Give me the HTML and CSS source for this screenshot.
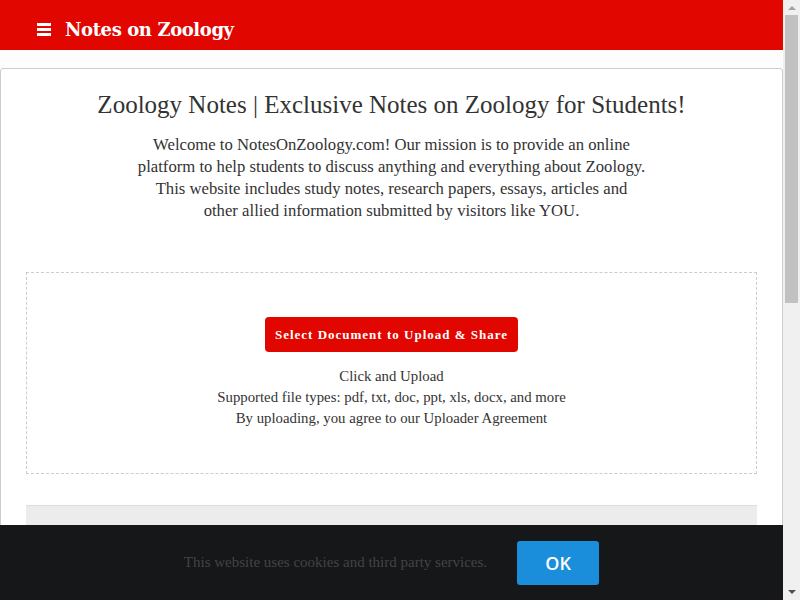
FILE: index.html
```html
<!DOCTYPE html>
<html lang="en">
<head>
<meta charset="utf-8">
<title>Notes on Zoology</title>
<link rel="stylesheet" href="styles.css">
</head>
<body>
<div class="page">
  <header class="topbar">
    <span class="burger" aria-hidden="true"><i></i><i></i><i></i></span>
    <a class="brand" href="#">Notes on Zoology</a>
  </header>
  <main class="card">
    <h1 class="title">Zoology Notes | Exclusive Notes on Zoology for Students!</h1>
    <p class="intro">Welcome to NotesOnZoology.com! Our mission is to provide an online<br>platform to help students to discuss anything and everything about Zoology.<br>This website includes study notes, research papers, essays, articles and<br>other allied information submitted by visitors like YOU.</p>
    <section class="upload">
      <button class="upload-btn" type="button">Select Document to Upload &amp; Share</button>
      <div class="upload-info">
        <div>Click and Upload</div>
        <div>Supported file types: pdf, txt, doc, ppt, xls, docx, and more</div>
        <div>By uploading, you agree to our Uploader Agreement</div>
      </div>
    </section>
    <section class="greybox"></section>
  </main>
</div>
<div class="cookie">
  <span class="cookie-text">This website uses cookies and third party services.</span>
  <button class="cookie-ok" type="button">OK</button>
</div>
<div class="scrollbar" aria-hidden="true">
  <span class="sb-up"></span>
  <span class="sb-thumb"></span>
  <span class="sb-down"></span>
</div>
</body>
</html>
```
FILE: styles.css
```css
html, body {
  margin: 0;
  padding: 0;
}
body {
  background: #fdfdfd;
  font-family: "Liberation Serif", "Times New Roman", serif;
  color: #333;
  overflow: hidden;
}
.page {
  width: 783px;
}
.topbar {
  height: 50px;
  background: #e10600;
  display: flex;
  align-items: center;
  padding: 9px 0 0 37px;
  gap: 14px;
  box-sizing: border-box;
}
.burger {
  width: 14px;
  height: 13px;
  display: flex;
  flex-direction: column;
  justify-content: space-between;
}
.burger i {
  display: block;
  height: 3px;
  background: #fff;
}
.brand {
  color: #fff;
  text-decoration: none;
  font-family: "DejaVu Serif", Georgia, serif;
  font-weight: bold;
  font-size: 18px;
  letter-spacing: -0.4px;
}
.card {
  margin-top: 18px;
  background: #fff;
  border: 1px solid #ccc;
  border-radius: 3px;
  padding: 20px 25px 0;
  height: 1200px;
}
.title {
  margin: 0;
  text-align: center;
  font-weight: normal;
  font-size: 25px;
  line-height: 32px;
  color: #333;
}
.intro {
  max-width: 560px;
  margin: 13px auto 0;
  text-align: center;
  font-size: 16.7px;
  line-height: 22px;
  color: #333;
}
.upload {
  margin-top: 50px;
  border: 1px dashed #ccc;
  height: 202px;
  display: flex;
  flex-direction: column;
  align-items: center;
  padding-top: 44px;
  box-sizing: border-box;
}
.upload-btn {
  background: #e10600;
  color: #fff;
  border: none;
  border-radius: 4px;
  font-family: "Liberation Serif", serif;
  font-weight: bold;
  font-size: 13px;
  letter-spacing: 1px;
  height: 35px;
  padding: 0 10px;
}
.upload-info {
  margin-top: 14px;
  text-align: center;
  font-size: 14.8px;
  line-height: 21px;
  color: #333;
}
.greybox {
  margin-top: 31px;
  background: #ececec;
  border-top: 1px solid #ddd;
  height: 400px;
}
.cookie {
  position: fixed;
  left: 0;
  right: 17px;
  bottom: 0;
  height: 75px;
  background: #161719;
  display: flex;
  align-items: center;
  justify-content: center;
  gap: 30px;
}
.cookie-text {
  font-family: "Liberation Serif", serif;
  font-size: 15px;
  color: #444;
}
.cookie-ok {
  width: 82px;
  height: 44px;
  background: #1b8edb;
  color: #fff;
  border: none;
  border-radius: 3px;
  font-family: "Open Sans", sans-serif;
  font-weight: 600;
  font-size: 18px;
}
.scrollbar {
  position: fixed;
  top: 0;
  right: 0;
  bottom: 0;
  width: 17px;
  background: #f0f0f0;
  display: flex;
  flex-direction: column;
  align-items: center;
}
.sb-up {
  margin-top: 6px;
  width: 0;
  height: 0;
  border-left: 4px solid transparent;
  border-right: 4px solid transparent;
  border-bottom: 4px solid #a3a3a3;
}
.sb-thumb {
  margin-top: 5px;
  width: 13px;
  height: 288px;
  background: #c1c1c1;
}
.sb-down {
  margin-top: auto;
  margin-bottom: 6px;
  width: 0;
  height: 0;
  border-left: 4px solid transparent;
  border-right: 4px solid transparent;
  border-top: 4px solid #505050;
}
```
